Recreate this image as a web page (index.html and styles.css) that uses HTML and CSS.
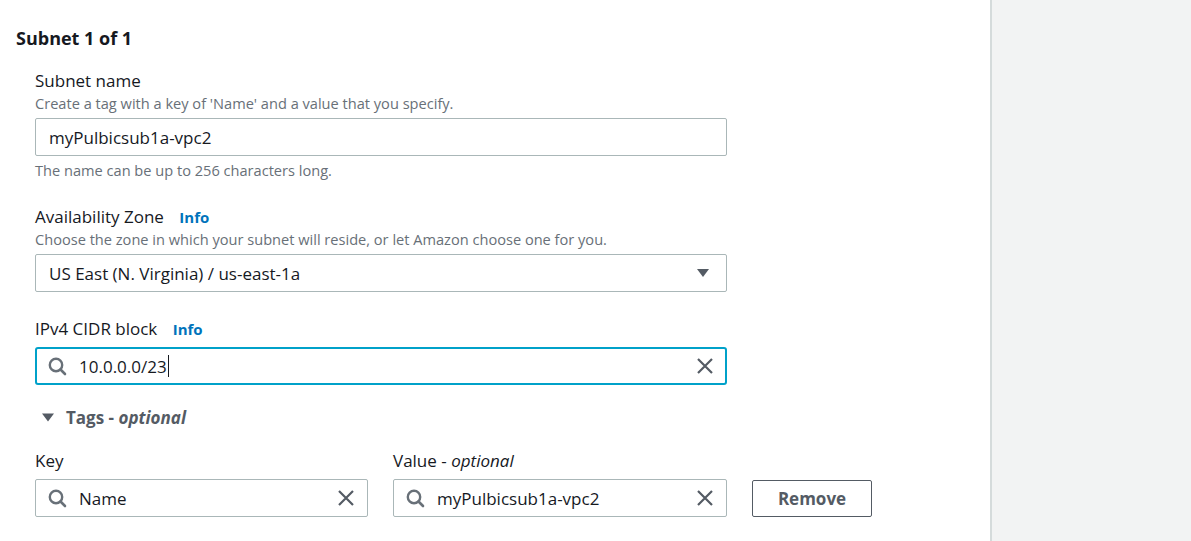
FILE: index.html
```html
<!DOCTYPE html>
<html>
<head>
<meta charset="utf-8">
<link rel="stylesheet" href="styles.css">
</head>
<body>
<div class="page">
  <main class="main">
    <h2 class="title">Subnet 1 of 1</h2>
    <div class="fields">
      <div class="field">
        <div class="label">Subnet name</div>
        <div class="desc">Create a tag with a key of 'Name' and a value that you specify.</div>
        <div class="input wide"><span class="val">myPulbicsub1a-vpc2</span></div>
        <div class="desc constraint">The name can be up to 256 characters long.</div>
      </div>
      <div class="field">
        <div class="label">Availability Zone <span class="info">Info</span></div>
        <div class="desc">Choose the zone in which your subnet will reside, or let Amazon choose one for you.</div>
        <div class="input wide select"><span class="val">US East (N. Virginia) / us-east-1a</span>
          <svg class="caret" width="14" height="10" viewBox="0 0 14 10"><path d="M1 1h12L7 9z" fill="#545b64"/></svg>
        </div>
      </div>
      <div class="field">
        <div class="label">IPv4 CIDR block <span class="info">Info</span></div>
        <div class="input wide focus search">
          <svg class="sicon" width="19" height="19" viewBox="0 0 19 19"><circle cx="8" cy="8" r="6.2" fill="none" stroke="#687078" stroke-width="2.4"/><path d="M12.5 12.5L17 17" stroke="#687078" stroke-width="2.6" stroke-linecap="round"/></svg>
          <span class="val">10.0.0.0/23<span class="cursor"></span></span>
          <svg class="xicon" width="18" height="18" viewBox="0 0 18 18"><path d="M2 2l14 14M16 2L2 16" stroke="#545b64" stroke-width="2.2"/></svg>
        </div>
      </div>
      <div class="tags-head">
        <svg width="12" height="9" viewBox="0 0 12 9"><path d="M0 0.5h12L6 8.5z" fill="#545b64"/></svg>
        <span>Tags - <em>optional</em></span>
      </div>
      <div class="tag-row">
        <div class="tag-col">
          <div class="label">Key</div>
          <div class="input search">
            <svg class="sicon" width="19" height="19" viewBox="0 0 19 19"><circle cx="8" cy="8" r="6.2" fill="none" stroke="#687078" stroke-width="2.4"/><path d="M12.5 12.5L17 17" stroke="#687078" stroke-width="2.6" stroke-linecap="round"/></svg>
            <span class="val">Name</span>
            <svg class="xicon" width="18" height="18" viewBox="0 0 18 18"><path d="M2 2l14 14M16 2L2 16" stroke="#545b64" stroke-width="2.2"/></svg>
          </div>
        </div>
        <div class="tag-col">
          <div class="label">Value - <em>optional</em></div>
          <div class="input search">
            <svg class="sicon" width="19" height="19" viewBox="0 0 19 19"><circle cx="8" cy="8" r="6.2" fill="none" stroke="#687078" stroke-width="2.4"/><path d="M12.5 12.5L17 17" stroke="#687078" stroke-width="2.6" stroke-linecap="round"/></svg>
            <span class="val">myPulbicsub1a-vpc2</span>
            <svg class="xicon" width="18" height="18" viewBox="0 0 18 18"><path d="M2 2l14 14M16 2L2 16" stroke="#545b64" stroke-width="2.2"/></svg>
          </div>
        </div>
        <button class="btn">Remove</button>
      </div>
    </div>
  </main>
  <aside class="side"></aside>
</div>
</body>
</html>
```
FILE: styles.css
```css
* { box-sizing: border-box; }
html, body { margin: 0; padding: 0; }
body {
  font-family: "Open Sans", "Noto Sans", Arial, sans-serif;
  color: #16191f;
  background: #fff;
  width: 1191px;
  height: 541px;
  overflow: hidden;
}
.page { display: flex; height: 541px; }
.main { width: 990px; padding: 26px 0 0 16px; }
.side { flex: 1; background: #f2f3f3; border-left: 2px solid #d5dbdb; }
.title { margin: 0; font-size: 18px; font-weight: 700; line-height: 24px; }
.fields { padding: 20px 0 0 19px; }
.field { margin-bottom: 26px; }
.label { font-size: 17px; line-height: 22px; color: #16191f; white-space: nowrap; }
.info { font-size: 15px; font-weight: 700; color: #0073bb; margin-left: 11px; }
.desc { font-size: 14.6px; line-height: 22px; color: #687078; white-space: nowrap; }
.constraint { margin-top: 4px; line-height: 20px; }
.input {
  height: 38px;
  border: 1px solid #aab7b8;
  border-radius: 2px;
  display: flex;
  align-items: center;
  padding: 0 13px;
  font-size: 17px;
  background: #fff;
  margin-top: 4px;
}
.input.wide { width: 692px; }
.val { flex: 1; display: flex; align-items: center; white-space: nowrap; }
.select .caret { margin-right: 3px; }
.focus { border: 2px solid #00a1c9; border-radius: 3px; padding: 0 12px 0 15px; margin-top: 7px; }
.search { padding-left: 12px; }
.focus.search { padding-left: 11px; }
.sicon { margin-right: 12px; flex: none; }
.xicon { flex: none; margin-right: -1px; }
.cursor { display: inline-block; width: 1px; height: 22px; background: #16191f; margin-left: 1px; }
.tags-head {
  display: flex; align-items: center; gap: 12px;
  font-size: 17px; font-weight: 700; color: #545b64;
  margin: -5px 0 0 7px; height: 22px;
}
.tags-head em, .label em { font-style: italic; }
.tags-head em { font-weight: 700; }
.tag-row { display: flex; align-items: flex-end; margin-top: 22px; }
.tag-col { width: 333px; margin-right: 25px; }
.tag-col + .tag-col { width: 334px; margin-right: 25px; }
.tag-col .input { margin-top: 7px; }
.btn {
  width: 120px; height: 37px;
  border: 1px solid #545b64; border-radius: 2px;
  background: #fff; color: #545b64;
  font-family: inherit; font-size: 17px; font-weight: 700;
  margin-bottom: 0;
}
```
